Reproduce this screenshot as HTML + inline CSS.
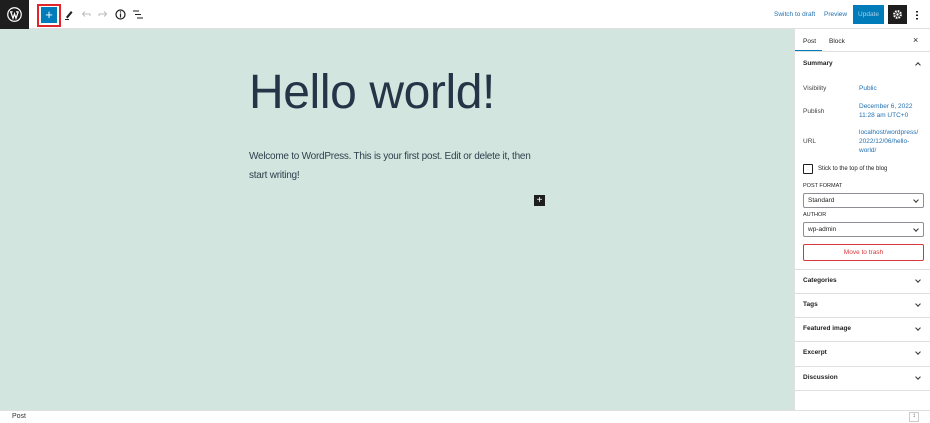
<!DOCTYPE html>
<html><head><meta charset="utf-8"><style>
*{box-sizing:border-box;margin:0;padding:0}
body{width:930px;height:423px;overflow:hidden;font-family:"Liberation Sans",sans-serif;background:#fff;position:relative;color:#1e1e1e}
.a{position:absolute}
.top{left:0;top:0;width:930px;height:29px;background:#fff;border-bottom:1px solid #e0e0e0}
.canvas{left:0;top:29px;width:794px;height:381px;background:#d2e5de}
.side{left:794px;top:29px;width:136px;height:381px;background:#fff;border-left:1px solid #e0e0e0}
.foot{left:0;top:410px;width:930px;height:13px;background:#fff;border-top:1px solid #e0e0e0;font-size:7px;color:#333}
.s{font-size:7px;color:#1e1e1e}
.blue{color:#2271b1}
.hr{position:absolute;left:0;width:136px;height:1px;background:#e0e0e0}
.sel{position:absolute;left:8px;width:121px;height:15px;border:1px solid #8c8f94;border-radius:2px;font-size:6.5px;padding:3px 4px;color:#1e1e1e}
.sel:after{content:"";position:absolute;right:5px;top:4px;width:3px;height:3px;border-right:1px solid #333;border-bottom:1px solid #333;transform:rotate(45deg)}
.chev{position:absolute;right:10px;width:4px;height:4px;border-right:1px solid #333;border-bottom:1px solid #333;transform:rotate(45deg)}
.pan{position:absolute;left:8px;font-size:6.5px;font-weight:bold;color:#1e1e1e}
</style></head><body>
<div class="a top">
  <div class="a" style="left:0;top:0;width:29px;height:29px;background:#1e1e1e"></div>
  <svg class="a" style="left:7px;top:7px" width="15" height="15" viewBox="0 0 20 20"><circle cx="10" cy="10" r="9" fill="none" stroke="#fff" stroke-width="1.6"/><path d="M4 6.5h3.5M12 6.5h3.5M5 6.5l3 8.5 2-6 2 6 3-8.5" fill="none" stroke="#fff" stroke-width="1.6"/></svg>
  <div class="a" style="left:37px;top:4px;width:24px;height:23px;border:2px solid #e0262b"></div>
  <div class="a" style="left:41px;top:7px;width:16px;height:16px;background:#007cba;color:#fff;font-size:13px;line-height:16px;text-align:center">+</div>
  <svg class="a" style="left:64px;top:9px" width="10" height="11" viewBox="0 0 10 11"><path d="M2 8L7 2l1.5 1.5L3.5 9.5z" fill="#1e1e1e"/><path d="M1 10.5h4" stroke="#1e1e1e"/></svg>
  <svg class="a" style="left:81px;top:10px" width="10" height="8" viewBox="0 0 10 8"><path d="M9 6V4H2M4 1.5L1.5 4 4 6.5" fill="none" stroke="#bbb"/></svg>
  <svg class="a" style="left:98px;top:10px" width="10" height="8" viewBox="0 0 10 8"><path d="M1 6V4h7M6 1.5L8.5 4 6 6.5" fill="none" stroke="#bbb"/></svg>
  <svg class="a" style="left:115px;top:9px" width="11" height="11" viewBox="0 0 11 11"><circle cx="5.5" cy="5.5" r="4.5" fill="none" stroke="#1e1e1e" stroke-width="1.2"/><path d="M5.5 4.5v4" stroke="#1e1e1e" stroke-width="1.2"/><circle cx="5.5" cy="3" r=".7" fill="#1e1e1e"/></svg>
  <svg class="a" style="left:133px;top:10px" width="10" height="9" viewBox="0 0 10 9"><path d="M0 1h6M2 4.5h6M4 8h6" stroke="#1e1e1e"/></svg>
  <div class="a s blue" style="left:774px;top:11px;font-size:6.5px">Switch to draft</div>
  <div class="a s blue" style="left:824px;top:11px;font-size:6.5px">Preview</div>
  <div class="a" style="left:853px;top:5px;width:31px;height:19px;background:#007cba;color:#a9cfe8;font-size:6.5px;line-height:19px;text-align:center">Update</div>
  <div class="a" style="left:888px;top:5px;width:19px;height:19px;background:#1e1e1e"></div>
  <svg class="a" style="left:892px;top:9px" width="11" height="11" viewBox="0 0 11 11"><circle cx="5.5" cy="5.5" r="3.3" fill="none" stroke="#fff" stroke-width="2.2" stroke-dasharray="1.6 1"/><circle cx="5.5" cy="5.5" r="1.2" fill="#fff"/></svg>
  <div class="a" style="left:916px;top:10px;width:2px;height:10px;background:radial-gradient(circle,#1e1e1e 45%,transparent 50%) 0 0/2px 3.5px"></div>
</div>
<div class="a canvas">
  <div class="a" style="left:249px;top:36px;font-size:48px;color:#253446;letter-spacing:-.4px">Hello world!</div>
  <div class="a" style="left:249px;top:118px;width:320px;font-size:10px;letter-spacing:-.25px;line-height:19px;color:#31404e">Welcome to WordPress. This is your first post. Edit or delete it, then<br>start writing!</div>
  <div class="a" style="left:534px;top:166px;width:11px;height:11px;background:#1e1e1e;color:#fff;font-size:10px;line-height:11px;text-align:center">+</div>
</div>
<div class="a side">
  <div class="a s" style="left:8px;top:9px;font-size:6.5px">Post</div>
  <div class="a s" style="left:34px;top:9px;font-size:6.5px">Block</div>
  <div class="a s" style="left:118px;top:6px;font-size:9px">×</div>
  <div class="a" style="left:0;top:21px;width:27px;height:1.5px;background:#007cba"></div>
  <div class="hr" style="top:22px"></div>
  <div class="pan" style="top:31px">Summary</div>
  <div class="chev" style="top:34px;transform:rotate(-135deg)"></div>
  <div class="a s" style="left:8px;top:56px;font-size:6.5px;color:#444">Visibility</div>
  <div class="a s blue" style="left:64px;top:56px;font-size:6.5px">Public</div>
  <div class="a s" style="left:8px;top:79px;font-size:6.5px;color:#444">Publish</div>
  <div class="a s blue" style="left:64px;top:73px;font-size:6.5px;line-height:9px">December 6, 2022<br>11:28 am UTC+0</div>
  <div class="a s" style="left:8px;top:109px;font-size:6.5px;color:#444">URL</div>
  <div class="a s blue" style="left:64px;top:99px;font-size:6.5px;line-height:9px">localhost/wordpress/<br>2022/12/06/hello-<br>world/</div>
  <div class="a" style="left:8px;top:135px;width:10px;height:10px;border:1px solid #1e1e1e;border-radius:1px"></div>
  <div class="a s" style="left:23px;top:137px;font-size:6px">Stick to the top of the blog</div>
  <div class="a s" style="left:8px;top:154px;font-size:5.5px">POST FORMAT</div>
  <div class="sel" style="top:164px">Standard</div>
  <div class="a s" style="left:8px;top:183px;font-size:5.5px">AUTHOR</div>
  <div class="sel" style="top:193px">wp-admin</div>
  <div class="a" style="left:8px;top:215px;width:121px;height:17px;border:1px solid #d63638;border-radius:2px;color:#d63638;font-size:6.5px;text-align:center;line-height:15px">Move to trash</div>
  <div class="hr" style="top:240px"></div>
  <div class="pan" style="top:248px">Categories</div><div class="chev" style="top:249px"></div>
  <div class="hr" style="top:264px"></div>
  <div class="pan" style="top:272px">Tags</div><div class="chev" style="top:273px"></div>
  <div class="hr" style="top:288px"></div>
  <div class="pan" style="top:296px">Featured image</div><div class="chev" style="top:297px"></div>
  <div class="hr" style="top:312px"></div>
  <div class="pan" style="top:320px">Excerpt</div><div class="chev" style="top:321px"></div>
  <div class="hr" style="top:337px"></div>
  <div class="pan" style="top:345px">Discussion</div><div class="chev" style="top:346px"></div>
  <div class="hr" style="top:361px"></div>
</div>
<div class="a foot"><span class="a" style="left:12px;top:2px">Post</span>
  <div class="a" style="left:909px;top:1px;width:10px;height:10px;border:1px solid #ccc;font-size:6px;text-align:center">↕</div></div>
</body></html>
